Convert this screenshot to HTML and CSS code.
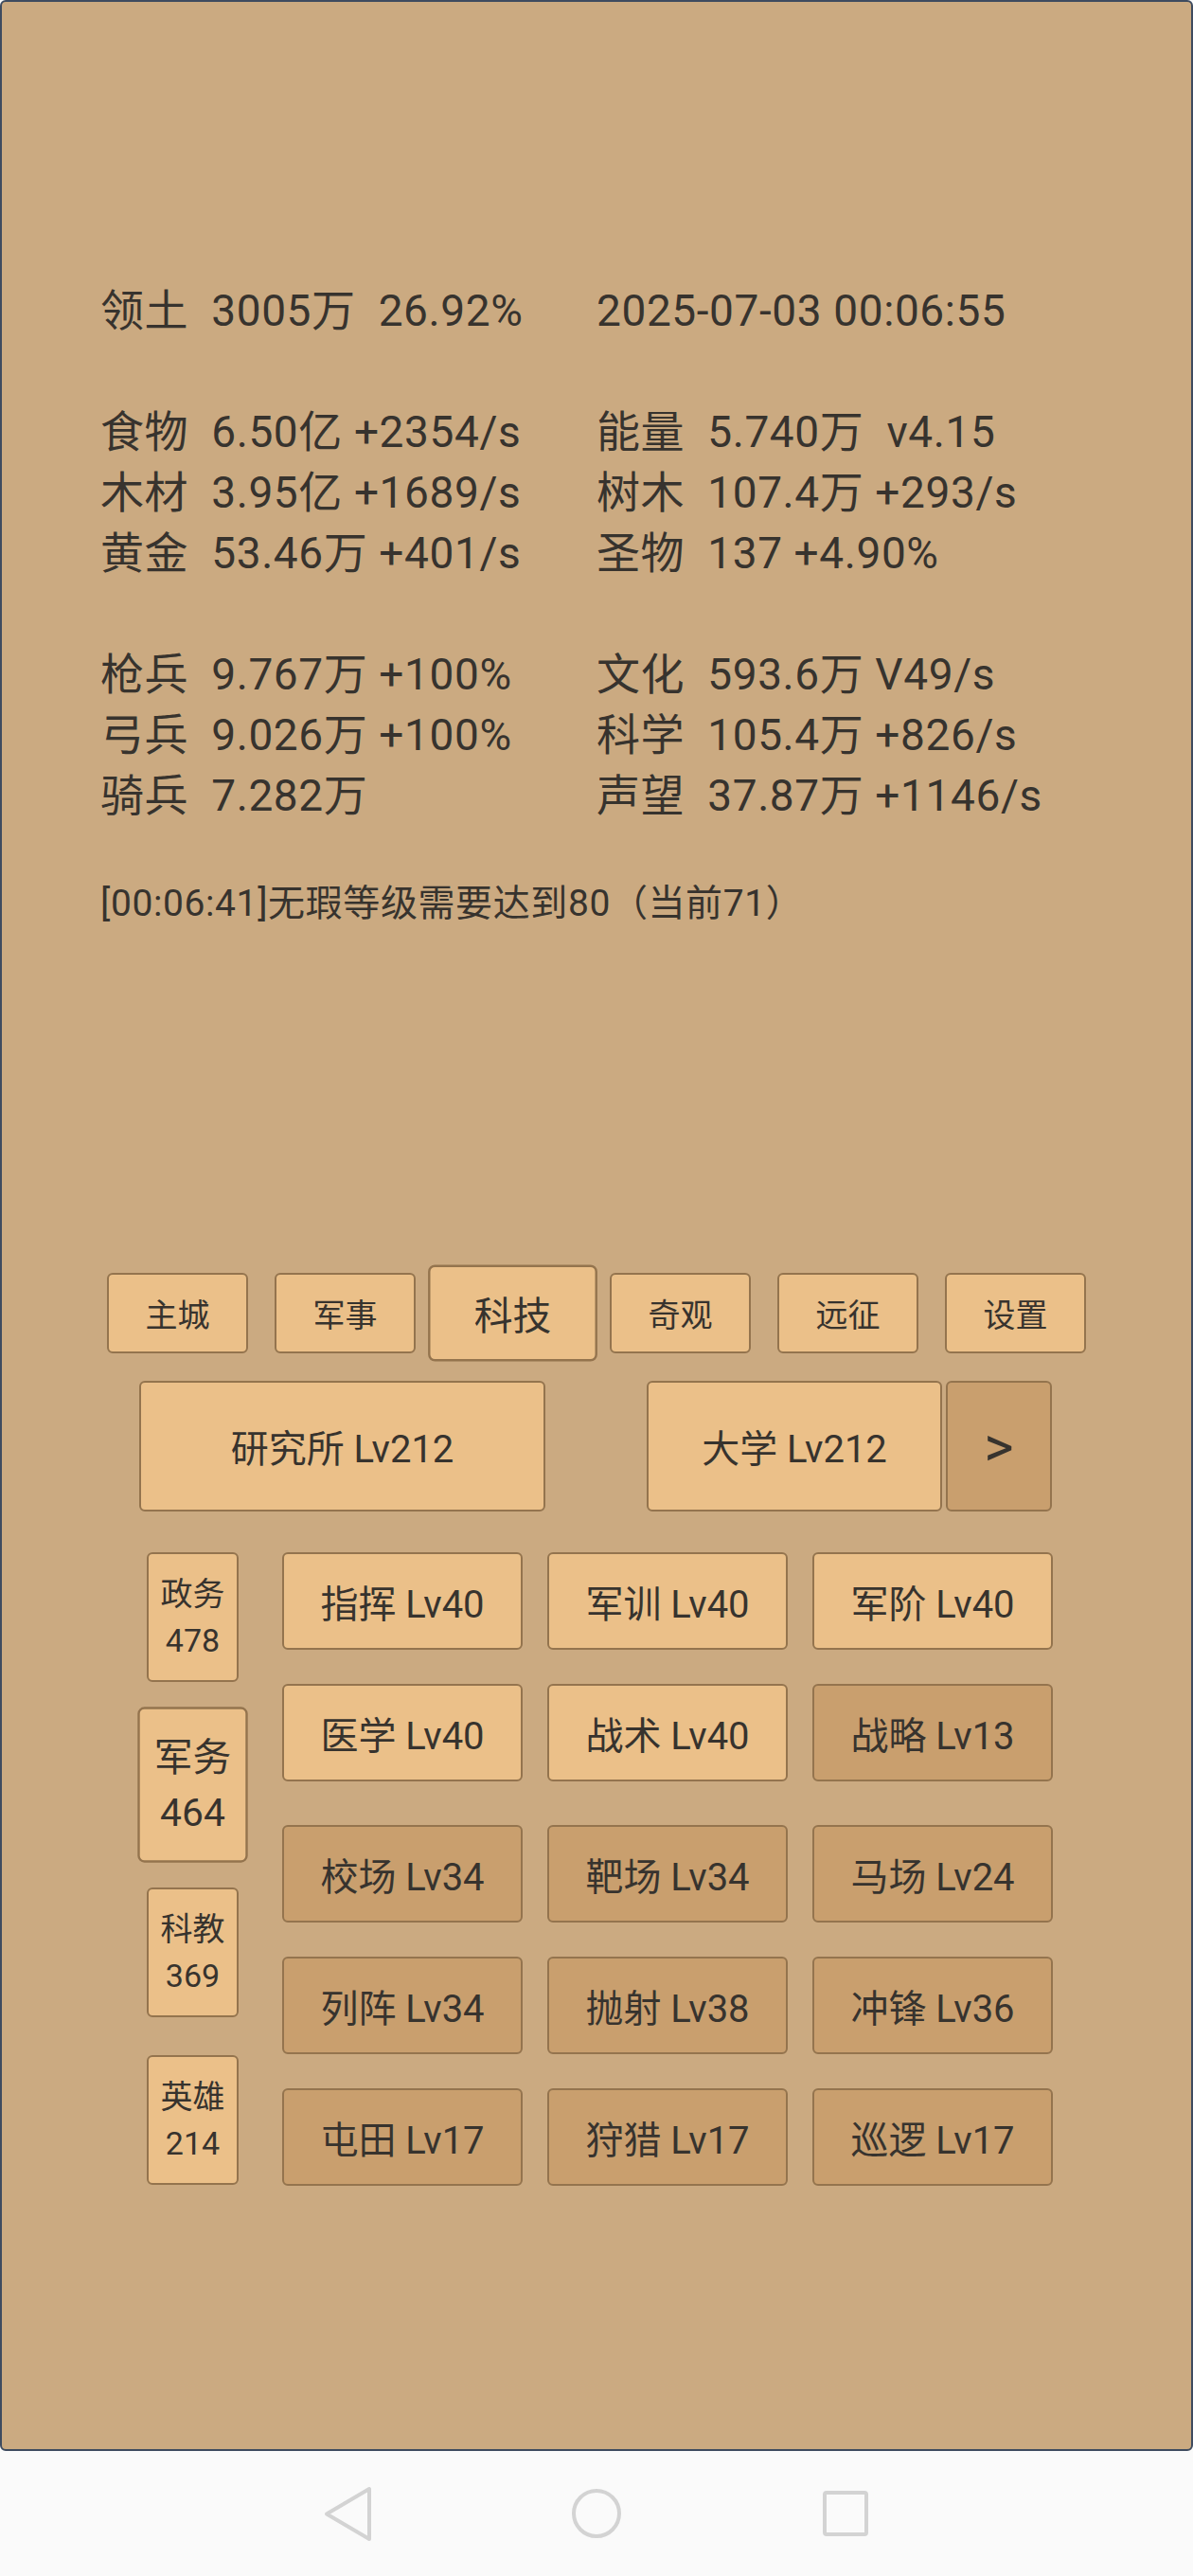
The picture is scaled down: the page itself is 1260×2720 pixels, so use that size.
FILE: index.html
```html
<html>
	<head>
	<meta charset="utf-8">
	<link rel="stylesheet" href="styles.css">
	</head>
	<body>
		<div class="panel">
			<div class="stats">
				<div>领土&nbsp; 3005万&nbsp; 26.92%</div><div>2025-07-03 00:06:55</div>
				<div class="blank"></div>
				<div>食物&nbsp; 6.50亿 +2354/s</div><div>能量&nbsp; 5.740万&nbsp; v4.15</div>
				<div>木材&nbsp; 3.95亿 +1689/s</div><div>树木&nbsp; 107.4万 +293/s</div>
				<div>黄金&nbsp; 53.46万 +401/s</div><div>圣物&nbsp; 137 +4.90%</div>
				<div class="blank"></div>
				<div>枪兵&nbsp; 9.767万 +100%</div><div>文化&nbsp; 593.6万 V49/s</div>
				<div>弓兵&nbsp; 9.026万 +100%</div><div>科学&nbsp; 105.4万 +826/s</div>
				<div>骑兵&nbsp; 7.282万</div><div>声望&nbsp; 37.87万 +1146/s</div>
			</div>
			<div class="msg">[00:06:41]无瑕等级需要达到80（当前71）</div>

			<div class="tabs">
				<div class="tab">主城</div>
				<div class="tab">军事</div>
				<div class="tab on">科技</div>
				<div class="tab">奇观</div>
				<div class="tab">远征</div>
				<div class="tab">设置</div>
			</div>

			<div class="main-row">
				<div class="big lab">研究所 Lv212</div>
				<div class="right-pair">
					<div class="big uni">大学 Lv212</div>
					<div class="big next dark">&gt;</div>
				</div>
			</div>

			<div class="bottom">
				<div class="cats">
					<div class="cat">政务<br>478</div>
					<div class="cat on">军务<br>464</div>
					<div class="cat">科教<br>369</div>
					<div class="cat">英雄<br>214</div>
				</div>
				<div class="blocks">
					<div class="grid">
						<div class="bld">指挥 Lv40</div>
						<div class="bld">军训 Lv40</div>
						<div class="bld">军阶 Lv40</div>
						<div class="bld">医学 Lv40</div>
						<div class="bld">战术 Lv40</div>
						<div class="bld dark">战略 Lv13</div>
					</div>
					<div class="grid">
						<div class="bld dark">校场 Lv34</div>
						<div class="bld dark">靶场 Lv34</div>
						<div class="bld dark">马场 Lv24</div>
						<div class="bld dark">列阵 Lv34</div>
						<div class="bld dark">抛射 Lv38</div>
						<div class="bld dark">冲锋 Lv36</div>
						<div class="bld dark">屯田 Lv17</div>
						<div class="bld dark">狩猎 Lv17</div>
						<div class="bld dark">巡逻 Lv17</div>
					</div>
				</div>
			</div>
		</div>

		<div class="navbar">
			<svg class="nav-icon" viewBox="0 0 60 60"><polygon points="53,4 53,57 8,30.5" /></svg>
			<svg class="nav-icon" viewBox="0 0 60 60"><circle cx="30" cy="30" r="24" /></svg>
			<svg class="nav-icon" viewBox="0 0 60 60"><rect x="8" y="8" width="44" height="44" rx="2" /></svg>
		</div>
	</body>
</html>
```

FILE: styles.css
```css
*{
	margin: 0px;
	padding: 0px;
	box-sizing: border-box;
}
body{
	width: 1260px;
	background: #fafafa;
	font-family: Roboto, "Noto Sans CJK SC", sans-serif;
	color: #37332e;
}
.panel{
	height: 2588px;
	background: #cbaa81;
	border: 2px solid #3e4b5f;
	border-radius: 6px;
}
.stats{
	display: grid;
	grid-template-columns: 524px auto;
	margin: 294px 0px 0px 104px;
	font-size: 46px;
	line-height: 64px;
	letter-spacing: 0.6px;
	white-space: nowrap;
}
.stats .blank{
	grid-column: 1 / 3;
	height: 64px;
}
.msg{
	margin: 59px 0px 0px 104px;
	font-size: 39px;
	line-height: 46px;
	letter-spacing: 0.6px;
	white-space: nowrap;
}

/* tabs */
.tabs{
	display: flex;
	justify-content: center;
	gap: 28px;
	margin-top: 367px;
}
.tab, .big, .cat, .bld{
	display: flex;
	align-items: center;
	justify-content: center;
	background: #ebc089;
	border: 2px solid #94744e;
	border-radius: 6px;
	text-align: center;
}
.tab{
	width: 149px;
	height: 85px;
	font-size: 34px;
}
.tab.on{
	transform: scale(1.2);
}
.dark{
	background: #c99f6e;
}

/* big buildings */
.main-row{
	display: flex;
	justify-content: space-between;
	width: 964px;
	margin: 29px 0px 0px 145px;
}
.right-pair{
	display: flex;
	gap: 4px;
}
.big{
	height: 138px;
	font-size: 40px;
}
.lab{
	width: 429px;
}
.uni{
	width: 312px;
}
.next{
	width: 112px;
	font-size: 60px;
}

/* categories + buildings */
.bottom{
	display: flex;
	gap: 46px;
	margin: 43px 0px 0px 153px;
}
.cats{
	display: flex;
	flex-direction: column;
	gap: 40px;
	width: 97px;
}
.cat{
	height: 137px;
	font-size: 34px;
	line-height: 49px;
}
.cat.on{
	transform: scale(1.2);
}
.blocks{
	display: flex;
	flex-direction: column;
	gap: 46px;
}
.grid{
	display: grid;
	grid-template-columns: 254px 254px 254px;
	column-gap: 26px;
	row-gap: 36px;
}
.bld{
	height: 103px;
	font-size: 40px;
	white-space: nowrap;
}

/* android nav */
.navbar{
	display: flex;
	justify-content: center;
	align-items: center;
	gap: 203px;
	height: 132px;
	background: #fafafa;
}
.nav-icon{
	width: 60px;
	height: 60px;
	fill: none;
	stroke: #d3d3d3;
	stroke-width: 4;
	stroke-linejoin: round;
}
```
